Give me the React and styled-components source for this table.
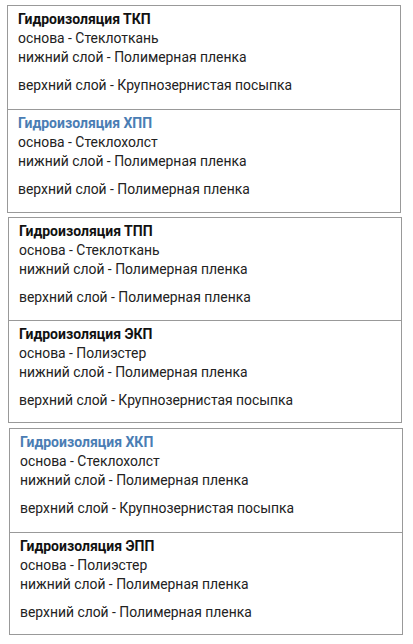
import styled, { createGlobalStyle } from "styled-components";

const GlobalStyle = createGlobalStyle`
  body {
    margin: 0;
    background: #fff;
    font-family: Roboto, "Liberation Sans", Arial, sans-serif;
    color: #222;
  }
`;

const Page = styled.div`
  display: flex;
  flex-direction: column;
`;

const Group = styled.div`
  width: 392px;
  margin: ${(p) => p.$top}px 0 0 ${(p) => p.$shift}px;
  border: 1px solid #999;
`;

const Card = styled.div`
  height: ${(p) => p.$h}px;
  box-sizing: border-box;
  padding: 4px 10px 0;
  & + & {
    border-top: 1px solid #999;
  }
`;

const Title = styled.div`
  font-size: 14px;
  line-height: 19px;
  font-weight: 700;
  color: ${(p) => (p.$blue ? "#4a7db4" : "#111")};
`;

const Lines = styled.p`
  margin: 0 0 9px;
  font-size: 13.9px;
  line-height: 19px;
`;

const groups = [
  {
    shift: 7,
    top: 5,
    h: 103,
    items: [
      { t: "Гидроизоляция ТКП", base: "Стеклоткань", top: "Крупнозернистая посыпка" },
      { t: "Гидроизоляция ХПП", base: "Стеклохолст", top: "Полимерная пленка", blue: true },
    ],
  },
  {
    shift: 8,
    top: 4,
    h: 102,
    items: [
      { t: "Гидроизоляция ТПП", base: "Стеклоткань", top: "Полимерная пленка" },
      { t: "Гидроизоляция ЭКП", base: "Полиэстер", top: "Крупнозернистая посыпка" },
    ],
  },
  {
    shift: 9,
    top: 5,
    h: 102.5,
    items: [
      { t: "Гидроизоляция ХКП", base: "Стеклохолст", top: "Крупнозернистая посыпка", blue: true },
      { t: "Гидроизоляция ЭПП", base: "Полиэстер", top: "Полимерная пленка" },
    ],
  },
];

export default function App() {
  return (
    <>
      <GlobalStyle />
      <Page>
        {groups.map((g, i) => (
          <Group key={i} $shift={g.shift} $top={g.top}>
            {g.items.map((c) => (
              <Card key={c.t} $h={g.h}>
                <Title $blue={c.blue}>{c.t}</Title>
                <Lines>
                  основа - {c.base}
                  <br />
                  нижний слой - Полимерная пленка
                </Lines>
                <Lines>верхний слой - {c.top}</Lines>
              </Card>
            ))}
          </Group>
        ))}
      </Page>
    </>
  );
}
